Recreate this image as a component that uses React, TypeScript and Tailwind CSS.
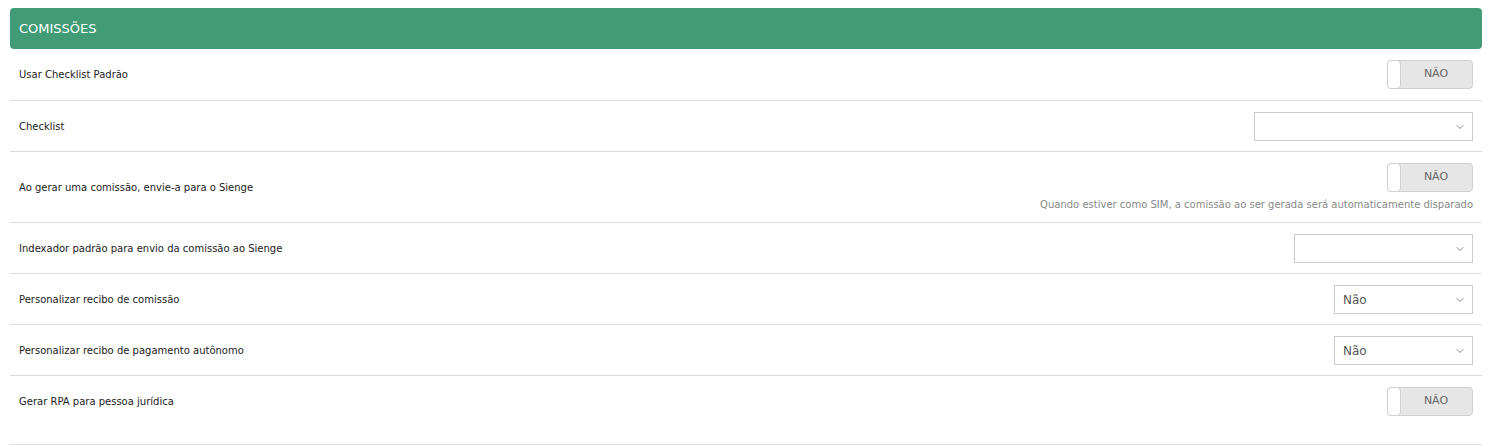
import { ChevronDown } from 'lucide-react';

function Toggle() {
  return (
    <div className="relative flex h-[29px] w-[86px] items-center rounded-[4px] border border-[#cfcfcf] bg-[#e6e6e6]">
      <div className="absolute -left-px -top-px h-[29px] w-[14px] rounded-[4px] border border-[#cfcfcf] bg-white" />
      <span className="flex-1 pl-[12px] text-center text-[11px] text-[#666]">NÃO</span>
    </div>
  );
}

function Select({ width, value }: { width: string; value?: string }) {
  return (
    <div
      className={`flex h-[29px] items-center justify-between border border-[#cccccc] bg-white pl-[8px] pr-[6px] ${width}`}
    >
      <span className="text-[12px] text-[#555]">{value}</span>
      <ChevronDown className="h-[12px] w-[12px] text-[#888]" strokeWidth={2} />
    </div>
  );
}

function Row({
  label,
  children,
  className = '',
}: {
  label: string;
  children: React.ReactNode;
  className?: string;
}) {
  return (
    <div
      className={`flex items-center justify-between border-b border-[#dddddd] pl-[9px] pr-[9px] pt-[11px] ${className}`}
    >
      <span className="text-[10px] text-[#222]">{label}</span>
      {children}
    </div>
  );
}

export default function App() {
  return (
    <div
      className="min-h-screen bg-white px-[10px] pt-[8px]"
      style={{ fontFamily: '"DejaVu Sans", Verdana, sans-serif' }}
    >
      <div className="flex h-[41px] items-center rounded-[4px] bg-[#419b77] px-[9px]">
        <h2 className="text-[13px] font-medium text-white">COMISSÕES</h2>
      </div>

      <Row label="Usar Checklist Padrão" className="pb-[11px]">
        <Toggle />
      </Row>
      <Row label="Checklist" className="pb-[10px]">
        <Select width="w-[219px]" />
      </Row>
      <Row label="Ao gerar uma comissão, envie-a para o Sienge" className="pb-[10px]">
        <div className="flex flex-col items-end">
          <Toggle />
          <p className="mt-[6px] text-[10px] leading-[14px] text-[#888]">
            Quando estiver como SIM, a comissão ao ser gerada será automaticamente disparado
          </p>
        </div>
      </Row>
      <Row label="Indexador padrão para envio da comissão ao Sienge" className="pb-[10px]">
        <Select width="w-[179px]" />
      </Row>
      <Row label="Personalizar recibo de comissão" className="pb-[10px]">
        <Select width="w-[139px]" value="Não" />
      </Row>
      <Row label="Personalizar recibo de pagamento autônomo" className="pb-[10px]">
        <Select width="w-[139px]" value="Não" />
      </Row>
      <Row label="Gerar RPA para pessoa jurídica" className="pb-[28px]">
        <Toggle />
      </Row>
    </div>
  );
}
